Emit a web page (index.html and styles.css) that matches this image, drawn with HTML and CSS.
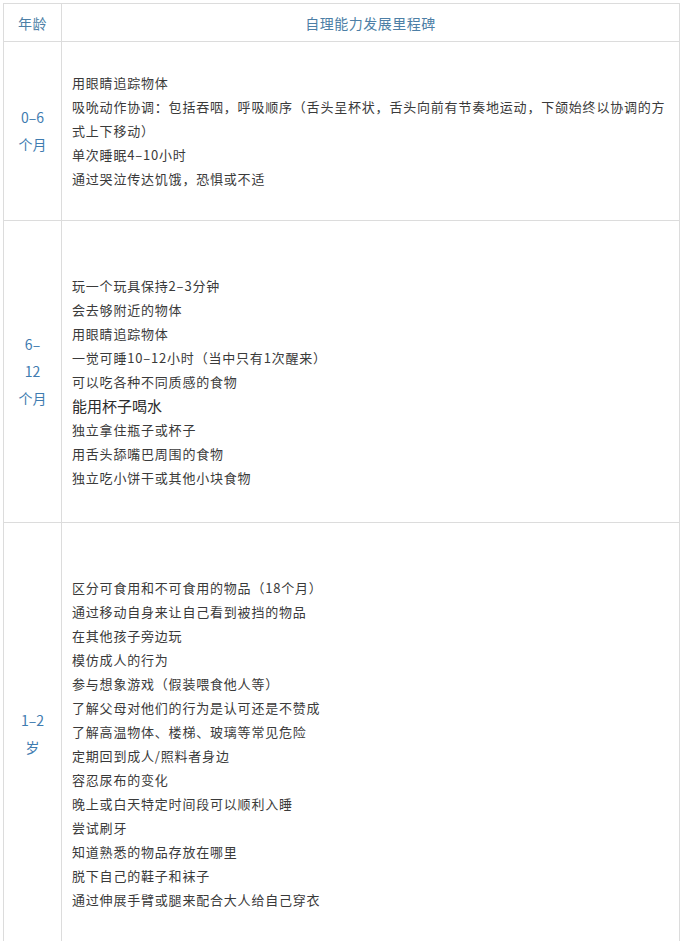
FILE: index.html
```html
<!DOCTYPE html>
<html lang="zh-CN">
<head>
<meta charset="utf-8">
<title>自理能力发展里程碑</title>
<link rel="stylesheet" href="styles.css">
</head>
<body>
<table class="milestones">
  <colgroup>
    <col class="col-age">
    <col class="col-text">
  </colgroup>
  <thead>
    <tr>
      <th class="head">年龄</th>
      <th class="head">自理能力发展里程碑</th>
    </tr>
  </thead>
  <tbody>
    <tr>
      <td class="age">0–6<br>个月</td>
      <td class="items">
        <p>用眼睛追踪物体</p>
        <p>吸吮动作协调：包括吞咽，呼吸顺序（舌头呈杯状，舌头向前有节奏地运动，下颌始终以协调的方式上下移动）</p>
        <p>单次睡眠4–10小时</p>
        <p>通过哭泣传达饥饿，恐惧或不适</p>
      </td>
    </tr>
    <tr>
      <td class="age">6–<br>12<br>个月</td>
      <td class="items items-lead">
        <p class="blank"><br></p>
        <p>玩一个玩具保持2–3分钟</p>
        <p>会去够附近的物体</p>
        <p>用眼睛追踪物体</p>
        <p>一觉可睡10–12小时（当中只有1次醒来）</p>
        <p>可以吃各种不同质感的食物</p>
        <p class="big">能用杯子喝水</p>
        <p>独立拿住瓶子或杯子</p>
        <p>用舌头舔嘴巴周围的食物</p>
        <p>独立吃小饼干或其他小块食物</p>
      </td>
    </tr>
    <tr>
      <td class="age">1–2<br>岁</td>
      <td class="items items-lead">
        <p class="blank"><br></p>
        <p>区分可食用和不可食用的物品（18个月）</p>
        <p>通过移动自身来让自己看到被挡的物品</p>
        <p>在其他孩子旁边玩</p>
        <p>模仿成人的行为</p>
        <p>参与想象游戏（假装喂食他人等）</p>
        <p>了解父母对他们的行为是认可还是不赞成</p>
        <p>了解高温物体、楼梯、玻璃等常见危险</p>
        <p>定期回到成人/照料者身边</p>
        <p>容忍尿布的变化</p>
        <p>晚上或白天特定时间段可以顺利入睡</p>
        <p>尝试刷牙</p>
        <p>知道熟悉的物品存放在哪里</p>
        <p>脱下自己的鞋子和袜子</p>
        <p>通过伸展手臂或腿来配合大人给自己穿衣</p>
      </td>
    </tr>
  </tbody>
</table>
</body>
</html>
```

FILE: styles.css
```css
html, body {
  margin: 0;
  padding: 0;
  background: #ffffff;
}

body {
  font-family: "Noto Sans CJK SC", "Noto Sans", "Liberation Sans", sans-serif;
}

.milestones {
  margin: 3px 0 0 3px;
  width: 677px;
  border-collapse: collapse;
  table-layout: fixed;
}

.col-age {
  width: 58px;
}

.milestones th,
.milestones td {
  border: 1px solid #dcdcdc;
}

.head {
  height: 37px;
  padding: 0;
  font-size: 14px;
  font-weight: normal;
  color: #4d7fa6;
  text-align: center;
  vertical-align: middle;
  letter-spacing: 0.5px;
}

.age {
  padding: 0 4px;
  text-align: center;
  vertical-align: middle;
  font-size: 14px;
  line-height: 27px;
  color: #3f7cb0;
}

.items {
  padding: 29px 10px 29px 10px;
  vertical-align: middle;
}

.items-lead {
  padding-bottom: 32px;
}

.items p {
  margin: 0;
  font-size: 13px;
  line-height: 24px;
  letter-spacing: 0.8px;
  color: #3a3a3a;
}

.items p.big {
  font-size: 15px;
  letter-spacing: 0;
  color: #2a2a2a;
}
```
